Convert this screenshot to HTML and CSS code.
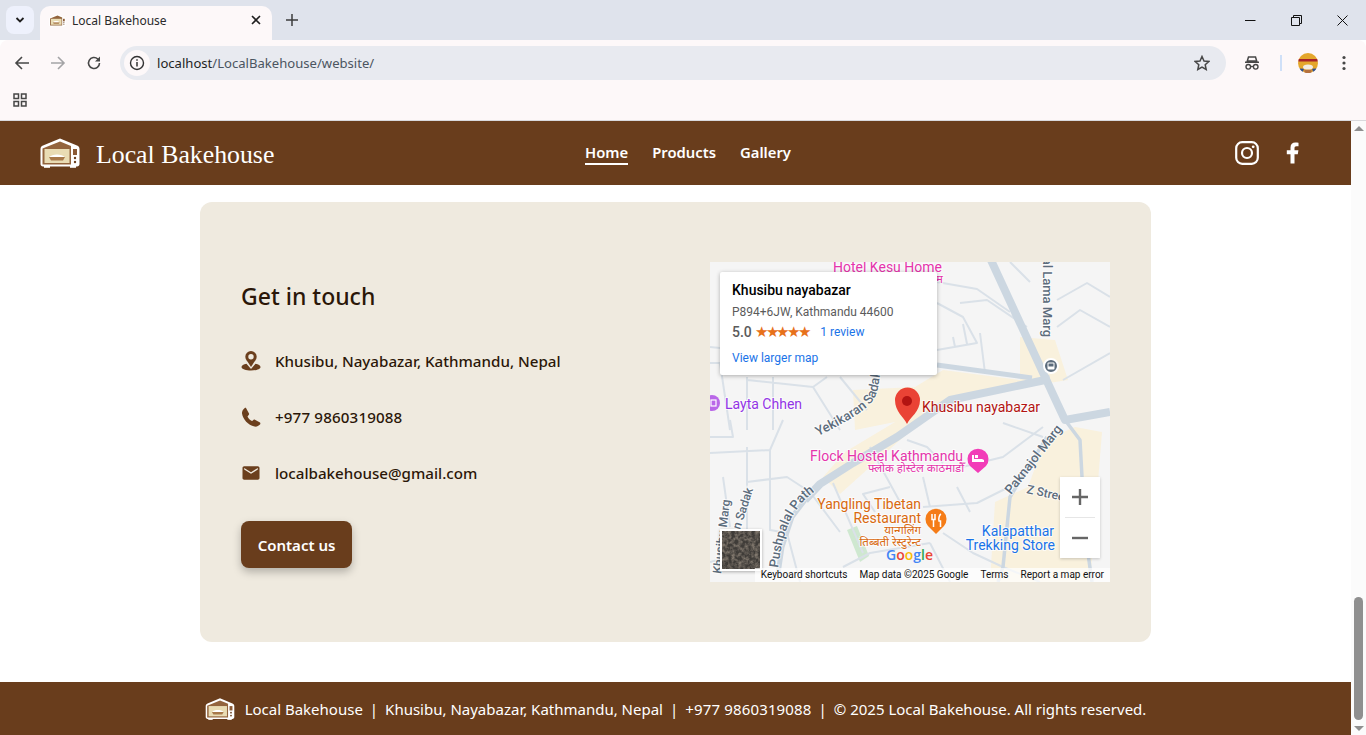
FILE: index.html
```html
<!DOCTYPE html>
<html lang="en">
<head>
  <meta charset="UTF-8" />
  <meta name="viewport" content="width=device-width, initial-scale=1.0" />
  <title>Local Bakehouse</title>
  <link rel="stylesheet" href="styles.css">
</head>
<body>
  <svg class="defs" width="0" height="0">
    <symbol id="oven" viewBox="0 0 40 30">
      <path d="M3 7.500 20 .5l17 7c1.500.6 2.500 1.800 2.500 3.500V26c0 1.500-1 2.500-2.500 2.500H3C1.500 28.500.5 27.500.5 26V11C.5 9.300 1.500 8.100 3 7.500z" fill="#fff"/>
      <rect x="4" y="28" width="6" height="1.800" fill="#fff"/>
      <rect x="30" y="28" width="6" height="1.800" fill="#fff"/>
      <path d="M2.500 10.500 20 3.500l11 4.400V26.500H2.500z" fill="#93643d"/>
      <rect x="4.500" y="11" width="25" height="14" fill="#e9dcb4"/>
      <path d="M9 19h16l-2 3.500H11z" fill="#a8794a"/>
      <path d="M9.500 19c2-3.500 13-3.500 15 0z" fill="#fff"/>
      <rect x="33" y="11" width="4" height="6" fill="#8b5a35"/>
      <circle cx="35" cy="20" r="1.200" fill="#6b3f1d"/>
      <circle cx="35" cy="24" r="1.200" fill="#6b3f1d"/>
    </symbol>
    <path id="curve-pushpalal" d="M68 306C71 285 75 265 85 250S100 234 106 228"/>
    <path id="curve-yekikaran" d="M108 174C125 166 145 155 156 146S168 128 170 112"/>
  </svg>

  <div class="browser">
    <div class="tabstrip">
      <button class="tab-list">
        <svg width="12" height="12" viewBox="0 0 12 12"><path d="M2.500 4 6 7.500 9.500 4" fill="none" stroke="#1f1f1f" stroke-width="1.800"/></svg>
      </button>
      <div class="tab">
        <svg class="tab-icon" width="17" height="13"><use href="#oven"/></svg>
        <span class="tab-title">Local Bakehouse</span>
        <svg width="10" height="10" viewBox="0 0 10 10"><path d="M1 1l8 8M9 1l-8 8" stroke="#1f1f1f" stroke-width="1.600"/></svg>
      </div>
      <svg class="new-tab" width="12" height="12" viewBox="0 0 12 12"><path d="M6 0v12M0 6h12" stroke="#3c3c3c" stroke-width="1.500"/></svg>
      <div class="window-btns">
        <svg width="11" height="11" viewBox="0 0 11 11"><path d="M0 5.500h10.500" stroke="#111" stroke-width="1"/></svg>
        <svg width="11" height="11" viewBox="0 0 11 11"><path d="M.5 2.500h8v8h-8zM2.500 2.500V.5h8v8H8.500" fill="none" stroke="#111" stroke-width="1"/></svg>
        <svg width="11" height="11" viewBox="0 0 11 11"><path d="M.5.5l10 10M10.500.5l-10 10" stroke="#111" stroke-width="1"/></svg>
      </div>
    </div>

    <div class="toolbar">
      <svg class="nav-icon" width="16" height="16" viewBox="0 0 16 16"><path d="M15 8H2M8 2 2 8l6 6" fill="none" stroke="#474747" stroke-width="1.600"/></svg>
      <svg class="nav-icon" width="16" height="16" viewBox="0 0 16 16"><path d="M1 8h13M8 2l6 6-6 6" fill="none" stroke="#a4a4a6" stroke-width="1.600"/></svg>
      <svg class="nav-icon" width="16" height="16" viewBox="0 0 16 16"><path d="M13.500 8A5.500 5.500 0 1 1 11.800 4L13.500 5.500" fill="none" stroke="#474747" stroke-width="1.600"/><path d="M14 1.500V6.500H9z" fill="#474747"/></svg>
      <div class="omnibox">
        <span class="site-info">
          <svg width="16" height="16" viewBox="0 0 16 16"><circle cx="8" cy="8" r="6.500" fill="none" stroke="#333" stroke-width="1.400"/><path d="M8 7v4.500M8 4.300v1.500" stroke="#333" stroke-width="1.500"/></svg>
        </span>
        <span class="url"><b>localhost</b>/LocalBakehouse/website/</span>
        <svg class="star" width="16" height="16" viewBox="0 0 16 16"><path d="M8 1.500l2 4.500 4.800.5-3.600 3.200 1 4.800L8 12.100l-4.200 2.400 1-4.800L1.200 6.500 6 6z" fill="none" stroke="#474747" stroke-width="1.500"/></svg>
      </div>
      <svg class="incognito" width="16" height="16" viewBox="0 0 16 16"><path d="M4.500 2h7l1.200 4H3.300zM1 7.200h14" fill="none" stroke="#474747" stroke-width="1.500"/><circle cx="4.300" cy="11.800" r="2.300" fill="none" stroke="#474747" stroke-width="1.400"/><circle cx="11.700" cy="11.800" r="2.300" fill="none" stroke="#474747" stroke-width="1.400"/><path d="M6.600 11.500h2.800" stroke="#474747" stroke-width="1.300"/></svg>
      <span class="divider"></span>
      <svg class="avatar" width="20" height="20" viewBox="0 0 20 20">
        <circle cx="10" cy="10" r="10" fill="#e4a72c"/>
        <path d="M.8 6h18.400l.5 2.500H.3z" fill="#a8232a"/>
        <path d="M1.500 15.500c1 1.500 2 2.500 3.500 3.300l1-3zM18.500 15.500c-1 1.500-2 2.500-3.500 3.300l-1-3z" fill="#2e4f8f"/>
        <path d="M6.500 19.400c2 .8 5 .8 7 0v-3h-7z" fill="#b5713e"/>
        <ellipse cx="10" cy="14" rx="5" ry="2.600" fill="#f3ede2"/>
      </svg>
      <svg class="dots" width="4" height="16" viewBox="0 0 4 16"><circle cx="2" cy="2.500" r="1.600" fill="#474747"/><circle cx="2" cy="8" r="1.600" fill="#474747"/><circle cx="2" cy="13.500" r="1.600" fill="#474747"/></svg>
    </div>

    <div class="bookmarks">
      <svg width="14" height="14" viewBox="0 0 14 14"><path d="M1 1h4.500v4.500H1zM8.500 1H13v4.500H8.500zM1 8.500h4.500V13H1zM8.500 8.500H13V13H8.500z" fill="none" stroke="#474747" stroke-width="1.500"/></svg>
    </div>

    <div class="viewport">
      <div class="page">
        <header class="site-header">
          <a class="brand">
            <svg width="40" height="30"><use href="#oven"/></svg>
            <span>Local Bakehouse</span>
          </a>
          <nav class="main-nav">
            <a class="active">Home</a>
            <a>Products</a>
            <a>Gallery</a>
          </nav>
          <div class="socials">
            <svg width="24" height="24" viewBox="0 0 24 24"><rect x="1.200" y="1.200" width="21.600" height="21.600" rx="6" fill="none" stroke="#fff" stroke-width="2.200"/><circle cx="12" cy="12" r="5" fill="none" stroke="#fff" stroke-width="2.200"/><circle cx="18.200" cy="5.800" r="1.400" fill="#fff"/></svg>
            <svg width="14" height="22" viewBox="0 0 14 22"><path d="M4.500 21.500V12.300H.8V8.300h3.700V5.500C4.500 2.300 6.500.5 9.300.5c1.300 0 2.800.2 3.200.3v3.500h-2c-1.600 0-2 .8-2 2v2h3.900l-.6 4H8.500v9.200z" fill="#fff"/></svg>
          </div>
        </header>

        <main class="main">
          <section class="contact-card">
            <div class="contact-info">
              <h2>Get in touch</h2>
              <div class="contact-row">
                <svg width="20" height="20" viewBox="0 0 20 20"><circle cx="10" cy="5.800" r="4.200" fill="none" stroke="#6b3f1d" stroke-width="3"/><path d="M5.500 9 10 16l4.500-7z" fill="#6b3f1d"/><path d="M5.500 12.800C2.500 13.400.5 14.600.5 16c0 2.200 4.500 3.500 9.500 3.500s9.500-1.300 9.500-3.500c0-1.400-2-2.600-5-3.200L10 18z" fill="#6b3f1d"/></svg>
                <span>Khusibu, Nayabazar, Kathmandu, Nepal</span>
              </div>
              <div class="contact-row">
                <svg width="20" height="20" viewBox="0 0 20 20"><path d="M5 1 8 6.500C8.500 7.500 7 8.500 6.500 9.500 7.500 11.500 9 13 11 14 12 13.500 12.500 12 13.500 12.500L19 15.500C19.500 16 19.500 17 19 17.500 17.500 19 15.500 20 13.500 19.500 7 18 2 12.500 1 6.500 .8 4.500 2 2.500 3.500 1.300 4 .9 4.700.7 5 1z" fill="#6b3f1d"/></svg>
                <span class="phone-num">+977 9860319088</span>
              </div>
              <div class="contact-row">
                <svg width="20" height="20" viewBox=".25 .25 23.500 23.500"><path d="M20 4H4c-1.100 0-1.990.9-1.990 2L2 18c0 1.100.9 2 2 2h16c1.100 0 2-.9 2-2V6c0-1.100-.9-2-2-2zm0 4l-8 5-8-5V6l8 5 8-5v2z" fill="#6b3f1d"/></svg>
                <span>localbakehouse@gmail.com</span>
              </div>
              <button class="contact-btn">Contact us</button>
            </div>

            <div class="map">
              <svg class="map-canvas" width="400" height="320" viewBox="0 0 400 320">
                <rect width="400" height="320" fill="#f5f5f5"/>
                <!-- built up blocks -->
                <path d="M143 128 205 125 233 108 310 118 310 75 345 78 358 118 240 137 190 178 130 232 113 215 135 190 185 160 145 168z" fill="#f9f1dd"/>
                <path d="M335 178 365 165 392 170 380 320 280 320 285 240 318 225z" fill="#f9f1dd"/>
                <path d="M137 268l10-4 12 30-9 6z" fill="#cfe8d0"/>
                <!-- small streets -->
                <g class="streets">
                  <path d="M0 101H10L20 168M0 85 30 88M37 115V168M63 115V168M37 118 103 125 117 115M130 115 157 148M103 125 130 168"/>
                  <path d="M227 88 267 81 253 55 227 41M243 75 245 85M253 62 257 82M270 71 275 111M250 41 277 38 317 65M227 20 267 27 300 50"/>
                  <path d="M347 65 370 48 400 65M347 38 377 21 400 35M353 118 400 91M300 0 320 20"/>
                  <path d="M0 191 60 188 73 158M20 158 23 175H0M37 185V268M60 188V268L77 271M13 215 20 265M37 220 77 215 100 230"/>
                  <path d="M123 221 153 291M213 215 220 245M180 225 153 232 165 250M233 271 263 291 293 305M213 245 267 241 297 226"/>
                  <path d="M240 208 293 195 333 165M293 161 333 175M133 305 160 291 220 281M197 178 217 185 233 201M160 185 190 240M247 225 260 250"/>
                  <path d="M100 230 130 270M0 300 40 290M77 271 90 320M220 281 240 320M293 305 330 320"/>
                </g>
                <g class="roads">
                  <path d="M280-4 347 141 355 158 400 150"/>
                  <path d="M95 238 110 222 143 201 187 175 240 138 340 117"/>
                  <path d="M227 103 322 116" class="road-mid"/>
                  <path d="M68 312 72 285 82 255 95 238" class="road-mid"/>
                  <path d="M355 158 370 178 375 270 382 320" class="road-thin"/>
                  <path d="M337 175 300 235 293 305 288 320" class="road-thin"/>
                </g>
                <g class="map-labels">
                  <text class="lbl pink" x="123" y="10">Hotel Kesu Home</text>
                  <text class="lbl-small pink end" x="233" y="21">होटल केशु होम</text>
                  <text class="lbl violet" x="15" y="147">Layta Chhen</text>
                  <text class="lbl red" x="212" y="150">Khusibu nayabazar</text>
                  <text class="lbl pink" x="100" y="199">Flock Hostel Kathmandu</text>
                  <text class="lbl-small pink" x="158" y="210">फ्लोक होस्टेल काठमाडौँ</text>
                  <text class="lbl orange end" x="211" y="247">Yangling Tibetan</text>
                  <text class="lbl orange end" x="211" y="261">Restaurant</text>
                  <text class="lbl-small orange end" x="211" y="272">यान्गलिंग</text>
                  <text class="lbl-small orange end" x="211" y="284">तिब्बती रेस्टुरेन्ट</text>
                  <text class="lbl blue end" x="344" y="274">Kalapatthar</text>
                  <text class="lbl blue end" x="345" y="288">Trekking Store</text>
                  <text class="street-name"><textPath href="#curve-yekikaran">Yekikaran Sadak</textPath></text>
                  <text class="street-name"><textPath href="#curve-pushpalal">Pushpalal Path</textPath></text>
                  <text class="street-name" transform="translate(301 233) rotate(-52)">Paknajol Marg</text>
                  <text class="street-name end" transform="translate(333 75) rotate(90)">Lal Lama Marg</text>
                  <text class="street-name small" transform="translate(316 231) rotate(12)">Z Street</text>
                  <text class="street-name small" transform="translate(11 312) rotate(-83)">Khusibu Marg</text>
                  <text class="street-name small" transform="translate(30 268) rotate(-72)">n Sadak</text>
                </g>
                <!-- pins -->
                <circle cx="2" cy="141" r="8" fill="#b968e8"/>
                <rect x="1" y="138" width="5" height="6" fill="none" stroke="#fff" stroke-width="1.200"/>
                <path d="M197 162c-3-7-12-12-12-24a12.500 12.500 0 0 1 25 0c0 12-10 17-13 24z" fill="#ea4335"/>
                <circle cx="197" cy="139" r="5" fill="#b31412"/>
                <path d="M268 211 260 204a10.500 10.500 0 1 1 16 0z" fill="#f23cb8"/>
                <path d="M262 200v-7h2v4h8l2 1v2zM265 193h3v3h-3z" fill="#fff"/>
                <g transform="translate(0 3)">
                  <path d="M226 269l-8-8a10.500 10.500 0 1 1 16 0z" fill="#f57c17"/>
                  <path d="M222 249v5.500h3V249M223.500 254v8M231 249c-2 1-2.500 5-2 7h1.500v6" fill="none" stroke="#fff" stroke-width="1.500"/>
                </g>
                <circle cx="341" cy="104" r="7" fill="#5c6c7c" stroke="#fff" stroke-width="2"/>
                <rect x="337.500" y="100.500" width="7" height="7" rx="1" fill="#fff"/>
                <rect x="338.500" y="101.500" width="5" height="3" fill="#5c6c7c"/>
                <text class="google" x="176" y="298"><tspan fill="#4285f4">G</tspan><tspan fill="#ea4335">o</tspan><tspan fill="#fbbc05">o</tspan><tspan fill="#4285f4">g</tspan><tspan fill="#34a853">l</tspan><tspan fill="#ea4335">e</tspan></text>
              </svg>

              <div class="map-card">
                <h3>Khusibu nayabazar</h3>
                <p class="addr">P894+6JW, Kathmandu 44600</p>
                <p class="rating"><b>5.0</b><span class="stars">★★★★★</span><a>1 review</a></p>
                <a class="larger">View larger map</a>
              </div>

              <div class="zoom-ctrl">
                <svg width="16" height="16" viewBox="0 0 16 16"><path d="M8 0v16M0 8h16" stroke="#666" stroke-width="2.400"/></svg>
                <span class="zoom-sep"></span>
                <svg width="16" height="16" viewBox="0 0 16 16"><path d="M0 8h16" stroke="#666" stroke-width="2.400"/></svg>
              </div>

              <svg class="sat-thumb" width="38" height="38">
                <filter id="sat"><feTurbulence type="fractalNoise" baseFrequency="0.3" numOctaves="3" seed="4"/><feColorMatrix values="0 0 0 0 0.05  0 0 0 0 0.045  0 0 0 0 0.04  1.8 0 0 0 -0.2"/></filter>
                <rect width="38" height="38" fill="#8d8377"/>
                <rect width="38" height="38" filter="url(#sat)"/>
              </svg>

              <div class="map-footer">
                <span>Keyboard shortcuts</span>
                <span>Map data ©2025 Google</span>
                <span>Terms</span>
                <span>Report a map error</span>
              </div>
            </div>
          </section>
        </main>

        <footer class="site-footer">
          <svg class="footer-logo" width="30" height="22"><use href="#oven"/></svg>
          <span>Local Bakehouse</span>
          <span>|</span>
          <span>Khusibu, Nayabazar, Kathmandu, Nepal</span>
          <span>|</span>
          <span class="phone-num">+977 9860319088</span>
          <span>|</span>
          <span>© 2025 Local Bakehouse. All rights reserved.</span>
        </footer>
      </div>

      <div class="scrollbar">
        <span class="arrow-up"></span>
        <span class="thumb"></span>
        <span class="arrow-down"></span>
      </div>
    </div>
  </div>
</body>
</html>
```

FILE: styles.css
```css
* {
  box-sizing: border-box;
}
html, body {
  height: 100%;
  margin: 0;
  overflow: hidden;
}
body {
  font-family: "Noto Sans", sans-serif;
  background: #fff;
}
.defs {
  position: absolute;
}
.browser {
  display: flex;
  flex-direction: column;
  height: 735px;
}

/* browser chrome */
.tabstrip {
  display: flex;
  align-items: flex-end;
  height: 40px;
  background: #dfe3ec;
  padding-left: 6px;
  flex-shrink: 0;
}
.tab-list {
  width: 28px;
  height: 28px;
  margin-bottom: 6px;
  border: none;
  border-radius: 8px;
  background: #eef1fc;
  display: flex;
  align-items: center;
  justify-content: center;
  padding: 0;
}
.tab {
  display: flex;
  align-items: center;
  width: 232px;
  height: 34px;
  margin-left: 6px;
  padding: 0 11px 6px 9px;
  background: #fdf8f9;
  border-radius: 10px 10px 0 0;
}
.tab-title {
  flex: 1;
  margin-left: 6px;
  font: 12px "Noto Sans", sans-serif;
  color: #2a2a2a;
}
.new-tab {
  margin: 0 0 14px 14px;
}
.window-btns {
  display: flex;
  gap: 35px;
  margin-left: auto;
  padding: 0 18px 14px 0;
}
.toolbar {
  display: flex;
  align-items: center;
  height: 40px;
  flex-shrink: 0;
  background: #fdf8f9;
  padding: 6px 0 0 14px;
  border-radius: 8px 8px 0 0;
}
.nav-icon {
  margin-right: 20px;
}
.omnibox {
  display: flex;
  align-items: center;
  width: 1106px;
  height: 34px;
  margin-left: -2px;
  border-radius: 17px;
  background: #e8eaf0;
  padding: 0 16px 0 4px;
}
.site-info {
  display: flex;
  align-items: center;
  justify-content: center;
  width: 26px;
  height: 26px;
  border-radius: 50%;
  background: #fdf8f9;
}
.url {
  flex: 1;
  margin-left: 7px;
  font-size: 13.1px;
  color: #4b5560;
}
.url b {
  font-weight: 400;
  color: #1f1f1f;
}
.incognito {
  margin-left: 18px;
}
.divider {
  width: 2px;
  height: 16px;
  margin-left: 20px;
  background: #cfe0f8;
}
.avatar {
  margin-left: 16px;
}
.dots {
  margin-left: 24px;
}
.bookmarks {
  display: flex;
  align-items: center;
  height: 41px;
  flex-shrink: 0;
  padding: 0 0 0 13px;
  background: #fdf8f9;
  border-bottom: 1px solid #d9d9dc;
}

/* page */
.viewport {
  display: flex;
  flex: 1;
  min-height: 0;
}
.page {
  flex: 1;
  display: flex;
  flex-direction: column;
  min-width: 0;
}
.site-header {
  display: flex;
  align-items: center;
  height: 64px;
  padding: 0 51px 0 40px;
  background: #693d1c;
  color: #fff;
}
.brand {
  display: flex;
  align-items: center;
  gap: 16px;
  width: 545px;
  font: 25.8px "Liberation Serif", serif;
}
.brand span {
  padding-top: 3px;
}
.main-nav {
  display: flex;
  gap: 24px;
  font-weight: 600;
  font-size: 14.8px;
}
.main-nav a {
  padding-bottom: 1px;
}
.main-nav .active {
  border-bottom: 2px solid #fff;
}
.socials {
  display: flex;
  align-items: center;
  gap: 27px;
  margin-left: auto;
}
.main {
  flex: 1;
  padding: 17px 200px 0;
}
.contact-card {
  display: flex;
  align-items: center;
  justify-content: space-between;
  height: 440px;
  padding: 0 41px;
  background: #efeadf;
  border-radius: 12px;
}
.contact-info h2 {
  margin: 0 0 33px;
  font-size: 23px;
  font-weight: 500;
  line-height: 40px;
  color: #2b1708;
}
.contact-row {
  display: flex;
  align-items: center;
  gap: 14px;
  height: 24px;
  margin-bottom: 32px;
  font-size: 15.15px;
  font-weight: 500;
  color: #2b1708;
}
.phone-num {
  letter-spacing: 0.15px;
}
.contact-btn {
  display: block;
  width: 111px;
  height: 47px;
  margin-top: 36px;
  border: none;
  border-radius: 8px;
  background: #693d1c;
  color: #fff;
  font: 600 15px "Noto Sans", sans-serif;
  box-shadow: 0 4px 8px rgba(0,0,0,0.25);
}

/* map */
.map {
  position: relative;
  width: 400px;
  height: 320px;
  overflow: hidden;
}
.map-canvas {
  display: block;
}
.streets path {
  fill: none;
  stroke: #dae1e8;
  stroke-width: 2;
  stroke-linejoin: round;
}
.roads path {
  fill: none;
  stroke: #ccd7e1;
  stroke-width: 8;
  stroke-linejoin: round;
}
.roads .road-mid {
  stroke-width: 5;
}
.roads .road-thin {
  stroke-width: 3.5;
}
.lbl, .lbl-small, .street-name {
  font-family: Roboto, "Noto Sans", sans-serif;
  paint-order: stroke;
  stroke: #fff;
  stroke-width: 2px;
  stroke-opacity: 0.7;
}
.lbl {
  font-size: 14px;
}
.lbl-small {
  font-size: 11.5px;
}
.end { text-anchor: end; }
.pink { fill: #e535ab; }
.violet { fill: #9334e6; }
.red { fill: #b31412; }
.orange { fill: #d9690f; }
.blue { fill: #1a73e8; }
.street-name {
  font-size: 13px;
  font-weight: 500;
  fill: #5c6c7c;
}
.street-name.small {
  font-size: 12px;
}
.google {
  font: 600 14px "Open Sans", sans-serif;
}
.map-card {
  position: absolute;
  left: 10px;
  top: 10px;
  width: 217px;
  height: 103px;
  padding: 9px 12px;
  background: #fff;
  border-radius: 2px;
  box-shadow: 0 1px 4px rgba(0,0,0,0.3);
  font-family: Roboto, sans-serif;
}
.map-card h3 {
  margin: 0;
  font-size: 14px;
  font-weight: 500;
  line-height: 19px;
  color: #000;
}
.addr {
  margin: 4px 0 0;
  font-size: 12px;
  line-height: 16px;
  color: #5b5b5b;
}
.rating {
  display: flex;
  align-items: center;
  margin: 3px 0 0;
  font-size: 12px;
  line-height: 18px;
}
.rating b {
  font-size: 14px;
  font-weight: 500;
  color: #5b5b5b;
}
.stars {
  margin-left: 3px;
  font-size: 15px;
  letter-spacing: -2.3px;
  color: #e7711b;
}
.rating a {
  margin-left: 12px;
  color: #1a73e8;
}
.larger {
  display: block;
  margin-top: 10px;
  font-size: 12px;
  color: #1a73e8;
}
.zoom-ctrl {
  position: absolute;
  right: 10px;
  top: 215px;
  display: flex;
  flex-direction: column;
  align-items: center;
  width: 40px;
  height: 81px;
  padding: 12px 0;
  background: #fff;
  box-shadow: 0 1px 3px rgba(0,0,0,0.2);
}
.zoom-sep {
  width: 30px;
  height: 1px;
  margin: 12px 0;
  background: #e6e6e6;
  flex-shrink: 0;
}
.sat-thumb {
  position: absolute;
  left: 10px;
  top: 267px;
  width: 42px;
  height: 42px;
  border: 2px solid #fff;
  box-shadow: 0 1px 3px rgba(0,0,0,0.3);
}
.map-footer {
  position: absolute;
  right: 0;
  bottom: 0;
  display: flex;
  gap: 12px;
  height: 14px;
  padding: 0 6px;
  background: rgba(255,255,255,0.7);
  font: 10px/14px Roboto, sans-serif;
  color: #111;
}

/* footer */
.site-footer {
  display: flex;
  align-items: center;
  justify-content: center;
  gap: 7px;
  height: 53px;
  padding-top: 1px;
  background: #693d1c;
  color: #fff;
  font-size: 15px;
}
.footer-logo {
  margin-right: 3px;
}

/* scrollbar */
.scrollbar {
  display: flex;
  flex-direction: column;
  align-items: center;
  width: 15px;
  background: #fbfbfb;
  padding: 5px 0 4px;
}
.arrow-up {
  border: 5px solid transparent;
  border-top: 0;
  border-bottom: 5px solid #8f8f8f;
}
.arrow-down {
  margin-top: 6px;
  border: 5px solid transparent;
  border-bottom: 0;
  border-top: 5px solid #8f8f8f;
}
.thumb {
  width: 9px;
  height: 123px;
  margin-top: auto;
  border-radius: 5px;
  background: #8f8f8f;
}
```
